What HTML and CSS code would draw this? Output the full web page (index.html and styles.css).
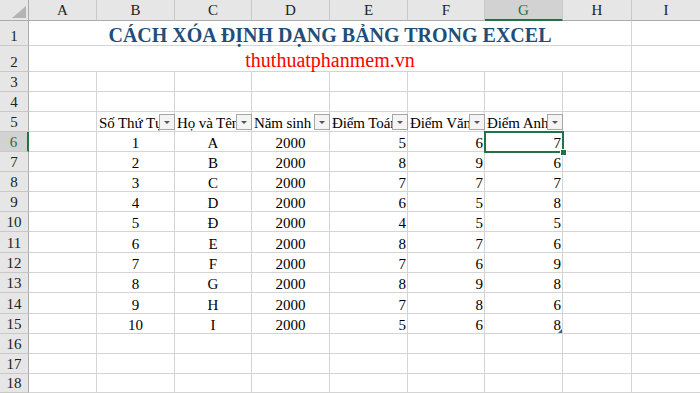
FILE: index.html
```html
<!DOCTYPE html>
<html lang="vi">
<head>
<meta charset="utf-8">
<title>Cách xóa định dạng bảng trong Excel</title>
<link rel="stylesheet" href="styles.css">
</head>
<body>
<div class="sheet">
  <!-- column headers -->
  <div class="corner"><svg width="14" height="12" viewBox="0 0 14 12"><polygon points="14,0 14,12 0,12" fill="#b4b4b4"/></svg></div>
  <div class="ch">A</div><div class="ch">B</div><div class="ch">C</div><div class="ch">D</div><div class="ch">E</div><div class="ch">F</div><div class="ch sel">G</div><div class="ch">H</div><div class="ch last">I</div>

  <!-- row 1 -->
  <div class="rh">1</div>
  <div class="c title">CÁCH XÓA ĐỊNH DẠNG BẢNG TRONG EXCEL</div>
  <div class="c last"></div>

  <!-- row 2 -->
  <div class="rh">2</div>
  <div class="c site">thuthuatphanmem.vn</div>
  <div class="c last"></div>

  <!-- row 3 -->
  <div class="rh">3</div>
  <div class="c"></div><div class="c"></div><div class="c"></div><div class="c"></div><div class="c"></div><div class="c"></div><div class="c"></div><div class="c"></div><div class="c last"></div>

  <!-- row 4 -->
  <div class="rh">4</div>
  <div class="c"></div><div class="c"></div><div class="c"></div><div class="c"></div><div class="c"></div><div class="c"></div><div class="c"></div><div class="c"></div><div class="c last"></div>

  <!-- row 5: table header -->
  <div class="rh">5</div>
  <div class="c"></div>
  <div class="c hd"><span class="t">Số Thứ Tự</span><span class="fb"></span></div>
  <div class="c hd"><span class="t">Họ và Tên</span><span class="fb"></span></div>
  <div class="c hd"><span class="t">Năm sinh</span><span class="fb"></span></div>
  <div class="c hd"><span class="t">Điểm Toán</span><span class="fb"></span></div>
  <div class="c hd"><span class="t">Điểm Văn</span><span class="fb"></span></div>
  <div class="c hd"><span class="t">Điểm Anh</span><span class="fb"></span></div>
  <div class="c"></div><div class="c last"></div>

  <!-- row 6 -->
  <div class="rh sel">6</div>
  <div class="c"></div><div class="c ctr">1</div><div class="c ctr">A</div><div class="c ctr">2000</div><div class="c num">5</div><div class="c num">6</div><div class="c num active">7<span class="selbox"><span class="handle"></span></span></div><div class="c"></div><div class="c last"></div>

  <!-- row 7 -->
  <div class="rh">7</div>
  <div class="c"></div><div class="c ctr">2</div><div class="c ctr">B</div><div class="c ctr">2000</div><div class="c num">8</div><div class="c num">9</div><div class="c num">6</div><div class="c"></div><div class="c last"></div>

  <!-- row 8 -->
  <div class="rh">8</div>
  <div class="c"></div><div class="c ctr">3</div><div class="c ctr">C</div><div class="c ctr">2000</div><div class="c num">7</div><div class="c num">7</div><div class="c num">7</div><div class="c"></div><div class="c last"></div>

  <!-- row 9 -->
  <div class="rh">9</div>
  <div class="c"></div><div class="c ctr">4</div><div class="c ctr">D</div><div class="c ctr">2000</div><div class="c num">6</div><div class="c num">5</div><div class="c num">8</div><div class="c"></div><div class="c last"></div>

  <!-- row 10 -->
  <div class="rh">10</div>
  <div class="c"></div><div class="c ctr">5</div><div class="c ctr">Đ</div><div class="c ctr">2000</div><div class="c num">4</div><div class="c num">5</div><div class="c num">5</div><div class="c"></div><div class="c last"></div>

  <!-- row 11 -->
  <div class="rh">11</div>
  <div class="c"></div><div class="c ctr">6</div><div class="c ctr">E</div><div class="c ctr">2000</div><div class="c num">8</div><div class="c num">7</div><div class="c num">6</div><div class="c"></div><div class="c last"></div>

  <!-- row 12 -->
  <div class="rh">12</div>
  <div class="c"></div><div class="c ctr">7</div><div class="c ctr">F</div><div class="c ctr">2000</div><div class="c num">7</div><div class="c num">6</div><div class="c num">9</div><div class="c"></div><div class="c last"></div>

  <!-- row 13 -->
  <div class="rh">13</div>
  <div class="c"></div><div class="c ctr">8</div><div class="c ctr">G</div><div class="c ctr">2000</div><div class="c num">8</div><div class="c num">9</div><div class="c num">8</div><div class="c"></div><div class="c last"></div>

  <!-- row 14 -->
  <div class="rh">14</div>
  <div class="c"></div><div class="c ctr">9</div><div class="c ctr">H</div><div class="c ctr">2000</div><div class="c num">7</div><div class="c num">8</div><div class="c num">6</div><div class="c"></div><div class="c last"></div>

  <!-- row 15 -->
  <div class="rh">15</div>
  <div class="c"></div><div class="c ctr">10</div><div class="c ctr">I</div><div class="c ctr">2000</div><div class="c num">5</div><div class="c num">6</div><div class="c num tbl-end">8<span class="resize"></span></div><div class="c"></div><div class="c last"></div>

  <!-- row 16 -->
  <div class="rh">16</div>
  <div class="c"></div><div class="c"></div><div class="c"></div><div class="c"></div><div class="c"></div><div class="c"></div><div class="c"></div><div class="c"></div><div class="c last"></div>

  <!-- row 17 -->
  <div class="rh">17</div>
  <div class="c"></div><div class="c"></div><div class="c"></div><div class="c"></div><div class="c"></div><div class="c"></div><div class="c"></div><div class="c"></div><div class="c last"></div>

  <!-- row 18 -->
  <div class="rh">18</div>
  <div class="c"></div><div class="c"></div><div class="c"></div><div class="c"></div><div class="c"></div><div class="c"></div><div class="c"></div><div class="c"></div><div class="c last"></div>
</div>
</body>
</html>
```

FILE: styles.css
```css
* {
  box-sizing: border-box;
}

html, body {
  margin: 0;
  padding: 0;
  background: #ffffff;
}

body {
  font-family: "Liberation Serif", "Times New Roman", serif;
  color: #000;
}

.sheet {
  display: grid;
  width: 700px;
  height: 393px;
  overflow: hidden;
  grid-template-columns: 29px 68px 78px 77px 78px 78px 77px 78px 69px 68px;
  grid-template-rows: 21px 25px 26px repeat(8, 20px) 21px 20px 20px 21px 20px 20px 20px 19px;
}

/* ---------- headers ---------- */
.corner {
  background: #e6e6e6;
  border-right: 1px solid #ababab;
  border-bottom: 1px solid #ababab;
  display: flex;
  align-items: flex-end;
  justify-content: flex-end;
  padding: 0 2px 2px 0;
}

.corner svg {
  display: block;
}

.ch {
  background: #e6e6e6;
  border-right: 1px solid #c8c8c8;
  border-bottom: 1px solid #ababab;
  display: flex;
  align-items: center;
  justify-content: center;
  font-size: 15px;
  line-height: 20px;
  color: #222;
}

.ch.last {
  border-right: none;
}

.ch.sel {
  background: #d2d2d2;
  color: #217346;
  border-bottom: 2px solid #217346;
}

.rh {
  background: #e6e6e6;
  border-right: 1px solid #ababab;
  border-bottom: 1px solid #c8c8c8;
  display: flex;
  align-items: flex-end;
  justify-content: center;
  font-size: 15px;
  line-height: 15px;
  color: #222;
  padding-bottom: 1px;
}

.rh.sel {
  background: #d2d2d2;
  color: #217346;
  border-right: 2px solid #217346;
}

/* ---------- cells ---------- */
.c {
  border-right: 1px solid #d4d4d4;
  border-bottom: 1px solid #d4d4d4;
  display: flex;
  align-items: flex-end;
  font-size: 15px;
  line-height: 15px;
  padding: 0 2px;
  white-space: nowrap;
  min-width: 0;
}

.c.last {
  border-right: none;
}

.ctr {
  justify-content: center;
}

.num {
  justify-content: flex-end;
  padding-right: 1px;
}

.title {
  grid-column: span 8;
  justify-content: center;
  font-weight: bold;
  font-size: 20px;
  line-height: 20px;
  color: #1f4e79;
}

.site {
  grid-column: span 8;
  justify-content: center;
  font-size: 20px;
  line-height: 20px;
  color: #ff0000;
  padding-bottom: 1px;
}

/* table header cells with filter buttons */
.hd {
  position: relative;
  padding-left: 2px;
}

.hd .t {
  flex: 1;
  min-width: 0;
  overflow: hidden;
  letter-spacing: -0.1px;
}

.fb {
  position: absolute;
  right: -1px;
  top: 2px;
  width: 16px;
  height: 16px;
  border: 1px solid #a6a6a6;
  background: #f4f4f4;
  z-index: 2;
}

.fb::after {
  content: "";
  position: absolute;
  left: 4px;
  top: 6px;
  border-left: 3px solid transparent;
  border-right: 3px solid transparent;
  border-top: 3px solid #555;
}

/* active cell selection */
.active {
  position: relative;
}

.selbox {
  position: absolute;
  left: -1px;
  top: -1px;
  right: -2px;
  bottom: -2px;
  border: 2px solid #217346;
  z-index: 3;
}

.handle {
  position: absolute;
  right: -5px;
  bottom: -5px;
  width: 7px;
  height: 7px;
  background: #217346;
  border: 1px solid #ffffff;
}

.tbl-end {
  position: relative;
}

.resize {
  position: absolute;
  right: 0;
  bottom: 0;
  width: 4px;
  height: 4px;
  background: #3b56b0;
  clip-path: polygon(100% 0, 100% 100%, 0 100%);
}
```
